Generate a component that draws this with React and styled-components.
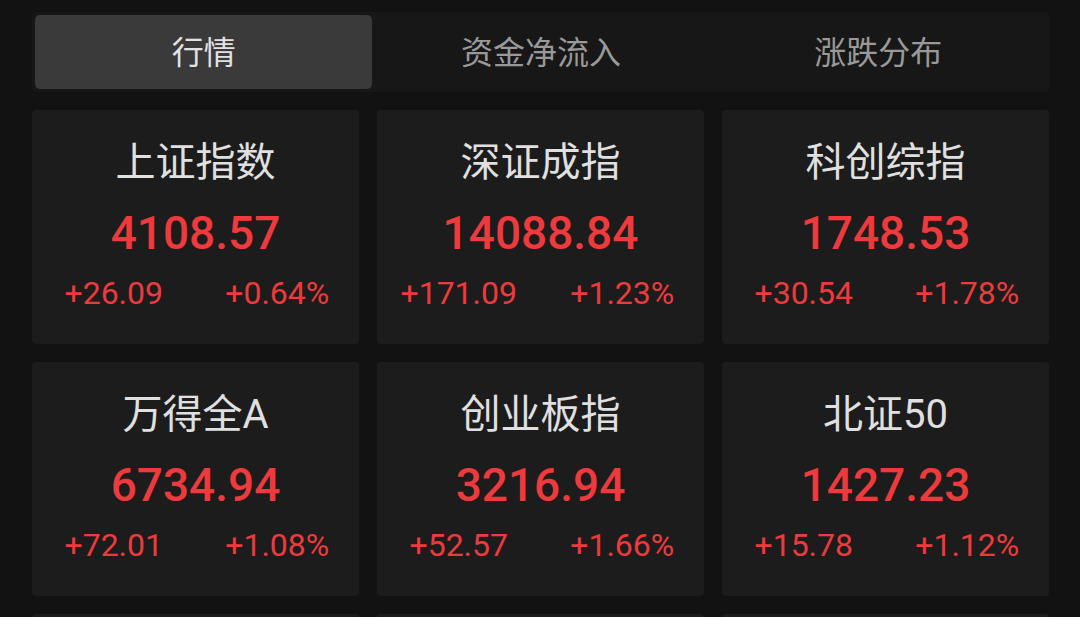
import React, { useState } from 'react';
import styled, { createGlobalStyle } from 'styled-components';

const GlobalStyle = createGlobalStyle`
  html, body {
    margin: 0;
    padding: 0;
    background: #121212;
    overflow: hidden;
  }

  body {
    font-family: Roboto, "Noto Sans CJK SC", sans-serif;
  }
`;

const Page = styled.div`
  padding: 12px 30px 0 32px;
  height: 617px;
  box-sizing: border-box;
  overflow: hidden;
`;

const TabBar = styled.nav`
  display: grid;
  grid-template-columns: repeat(3, 1fr);
  padding: 3px;
  border-radius: 6px;
  background: #171717;
`;

const Tab = styled.button`
  height: 74px;
  padding: 0 0 5px;
  border: none;
  border-radius: 5px;
  background: ${({ $active }) => ($active ? '#3a3a3a' : 'transparent')};
  color: ${({ $active }) => ($active ? '#e2e2e2' : '#999999')};
  font-family: "Noto Sans CJK SC", sans-serif;
  font-size: 32px;
  cursor: pointer;
`;

const Grid = styled.div`
  display: grid;
  grid-template-columns: repeat(3, 327px);
  gap: 18px;
  margin-top: 18px;
`;

const Card = styled.div`
  display: flex;
  flex-direction: column;
  align-items: center;
  height: 234px;
  padding-top: 30px;
  box-sizing: border-box;
  border-radius: 4px;
  background: #1c1c1c;
`;

const Name = styled.div`
  color: #e0e0e0;
  font-size: 40px;
  line-height: 46px;
`;

const Price = styled.div`
  margin-top: 22px;
  color: #ee3a3c;
  font-size: 46px;
  font-weight: 500;
  line-height: 50px;
`;

const Changes = styled.div`
  display: grid;
  grid-template-columns: 1fr 1fr;
  width: 100%;
  margin-top: 15px;
  color: #ee3a3c;
  font-size: 32px;
  line-height: 40px;

  span {
    text-align: center;
  }
`;

const tabs = ['行情', '资金净流入', '涨跌分布'];

const indices = [
  { name: '上证指数', price: '4108.57', change: '+26.09', pct: '+0.64%' },
  { name: '深证成指', price: '14088.84', change: '+171.09', pct: '+1.23%' },
  { name: '科创综指', price: '1748.53', change: '+30.54', pct: '+1.78%' },
  { name: '万得全A', price: '6734.94', change: '+72.01', pct: '+1.08%' },
  { name: '创业板指', price: '3216.94', change: '+52.57', pct: '+1.66%' },
  { name: '北证50', price: '1427.23', change: '+15.78', pct: '+1.12%' },
];

// third row is scrolled mostly out of view, only the card tops show
const moreRows = ['r3a', 'r3b', 'r3c'];

const App = () => {
  const [active, setActive] = useState(0);

  return (
    <Page>
      <GlobalStyle />
      <TabBar>
        {tabs.map((t, i) => (
          <Tab key={t} $active={i === active} onClick={() => setActive(i)}>
            {t}
          </Tab>
        ))}
      </TabBar>

      <Grid>
        {indices.map(idx => (
          <Card key={idx.name}>
            <Name>{idx.name}</Name>
            <Price>{idx.price}</Price>
            <Changes>
              <span>{idx.change}</span>
              <span>{idx.pct}</span>
            </Changes>
          </Card>
        ))}
        {moreRows.map(k => (
          <Card key={k} />
        ))}
      </Grid>
    </Page>
  );
};

export default App;
